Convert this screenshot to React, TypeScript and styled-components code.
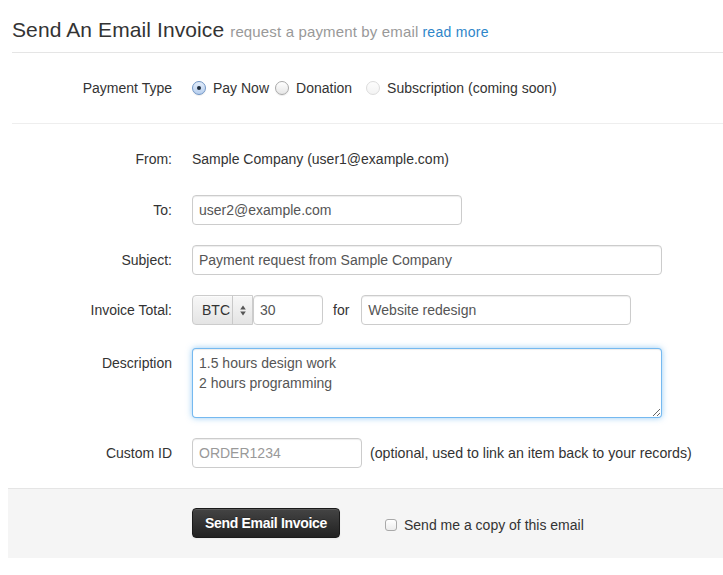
import React from "react";
import styled, { createGlobalStyle } from "styled-components";

const Global = createGlobalStyle`
  html, body { margin: 0; padding: 0; background: #fff; }
  body { font-family: "Liberation Sans", Arial, sans-serif; font-size: 14px; color: #333; }
  * { box-sizing: border-box; }
`;

const Page = styled.div`
  width: 723px;
  padding-left: 12px;
`;

const Header = styled.div`
  height: 53px;
  padding-top: 15px;
  border-bottom: 1px solid #e5e5e5;
  white-space: nowrap;
`;

const Title = styled.span`
  font-size: 21px;
  line-height: 30px;
  color: #333;
  letter-spacing: 0.1px;
`;

const Sub = styled.span`
  font-size: 15px;
  color: #999;
  margin-left: 6px;
  letter-spacing: 0.15px;
`;

const Link = styled.a`
  color: #2e86c9;
  text-decoration: none;
  margin-left: 4px;
  letter-spacing: 0.3px;
`;

const TypeSection = styled.div`
  padding: 25px 0 25px;
  border-bottom: 1px solid #eee;
`;

const Form = styled.div`
  padding-top: 20px;
`;

const Row = styled.div<{ $mb?: number }>`
  display: flex;
  align-items: flex-start;
  margin-bottom: ${(p) => (p.$mb ?? 20)}px;
`;

const Label = styled.div<{ $pt?: number }>`
  width: 160px;
  flex: none;
  text-align: right;
  line-height: 20px;
  padding-top: ${(p) => (p.$pt ?? 5)}px;
  margin-right: 20px;
`;

const Controls = styled.div<{ $pt?: number }>`
  display: flex;
  align-items: center;
  line-height: 20px;
  padding-top: ${(p) => (p.$pt ?? 0)}px;
  white-space: nowrap;
`;

const Radio = styled.span<{ $checked?: boolean; $disabled?: boolean }>`
  display: inline-block;
  position: relative;
  width: 14px;
  height: 14px;
  border-radius: 50%;
  margin-right: 7px;
  border: 1px solid ${(p) => (p.$checked ? "#6f94c4" : p.$disabled ? "#dcdcdc" : "#a9a9a9")};
  background: ${(p) =>
    p.$checked
      ? "linear-gradient(#e3edfa, #b7cfee)"
      : p.$disabled
      ? "linear-gradient(#fdfdfd, #f3f3f3)"
      : "linear-gradient(#ffffff, #e6e6e6)"};
  box-shadow: ${(p) => (p.$disabled ? "none" : "0 1px 1px rgba(0,0,0,0.08)")};
  &::after {
    content: "";
    display: ${(p) => (p.$checked ? "block" : "none")};
    position: absolute;
    left: 4px;
    top: 4px;
    width: 4px;
    height: 4px;
    border-radius: 50%;
    background: #1d2a3a;
  }
`;

const RadioLabel = styled.span<{ $mr: number }>`
  margin-right: ${(p) => p.$mr}px;
`;

const Input = styled.input<{ $w: number }>`
  width: ${(p) => p.$w}px;
  height: 30px;
  padding: 4px 6px;
  border: 1px solid #ccc;
  border-radius: 4px;
  font-family: "Liberation Sans", Arial, sans-serif;
  font-size: 14px;
  color: #555;
  line-height: 20px;
  box-shadow: inset 0 1px 1px rgba(0, 0, 0, 0.075);
  outline: none;
  background: #fff;
  &::placeholder { color: #999; }
`;

const TextArea = styled.textarea`
  width: 470px;
  height: 70px;
  padding: 4px 6px;
  border: 1px solid rgba(82, 168, 236, 0.8);
  border-radius: 4px;
  font-family: "Liberation Sans", Arial, sans-serif;
  font-size: 14px;
  line-height: 20px;
  color: #555;
  outline: none;
  box-shadow: inset 0 1px 1px rgba(0, 0, 0, 0.075), 0 0 6px rgba(82, 168, 236, 0.6);
  resize: both;
`;

const Select = styled.div`
  display: flex;
  align-items: center;
  width: 61px;
  height: 30px;
  border: 1px solid #ccc;
  border-radius: 4px 0 0 4px;
  background: linear-gradient(#f7f7f7, #e4e4e4);
  box-shadow: inset 0 1px 0 rgba(255,255,255,0.6);
  color: #333;
`;

const SelectText = styled.span`
  padding-left: 9px;
  width: 40px;
  border-right: 1px solid #c9c9c9;
  line-height: 28px;
`;

const Arrows = styled.span`
  flex: 1;
  display: flex;
  justify-content: center;
`;

const ForText = styled.span`
  margin: 0 12px 0 10px;
`;

const Help = styled.span`
  margin-left: 8px;
  color: #333;
  font-size: 14.2px;
`;

const Footer = styled.div`
  display: flex;
  align-items: center;
  margin-left: -4px;
  padding: 19px 0 20px 184px;
  height: 70px;
  background: #f5f5f5;
  border-top: 1px solid #e5e5e5;
`;

const Button = styled.button`
  width: 148px;
  height: 30px;
  border: 1px solid #1a1a1a;
  border-radius: 4px;
  background: linear-gradient(#444, #222);
  color: #fff;
  font-family: "Liberation Sans", Arial, sans-serif;
  font-size: 14px;
  font-weight: bold;
  letter-spacing: -0.3px;
  text-shadow: 0 -1px 0 rgba(0,0,0,0.25);
  box-shadow: inset 0 1px 0 rgba(255,255,255,0.12), 0 1px 2px rgba(0,0,0,0.05);
  padding: 0;
`;

const Check = styled.span`
  display: inline-block;
  width: 12px;
  height: 12px;
  margin: 4px 7px 0 45px;
  border: 1px solid #a9a9a9;
  border-radius: 3px;
  background: linear-gradient(#fff, #ececec);
`;

const CheckLabel = styled.span`
  padding-top: 4px;
`;

export default function App() {
  return (
    <>
      <Global />
      <Page>
        <Header>
          <Title>Send An Email Invoice</Title>
          <Sub>request a payment by email</Sub>
          <Link href="#">read more</Link>
        </Header>
        <TypeSection>
          <Row $mb={0}>
            <Label $pt={0}>Payment Type</Label>
            <Controls>
              <Radio $checked />
              <RadioLabel $mr={6}>Pay Now</RadioLabel>
              <Radio />
              <RadioLabel $mr={14}>Donation</RadioLabel>
              <Radio $disabled />
              <RadioLabel $mr={0}>Subscription (coming soon)</RadioLabel>
            </Controls>
          </Row>
        </TypeSection>
        <Form>
          <Row $mb={26}>
            <Label>From:</Label>
            <Controls $pt={5}>Sample Company (user1@example.com)</Controls>
          </Row>
          <Row>
            <Label>To:</Label>
            <Controls>
              <Input $w={270} defaultValue="user2@example.com" />
            </Controls>
          </Row>
          <Row>
            <Label>Subject:</Label>
            <Controls>
              <Input $w={470} defaultValue="Payment request from Sample Company" />
            </Controls>
          </Row>
          <Row $mb={23}>
            <Label>Invoice Total:</Label>
            <Controls>
              <Select>
                <SelectText>BTC</SelectText>
                <Arrows>
                  <svg width="6" height="11" viewBox="0 0 6 11">
                    <path d="M3 0.5 L5.8 4.5 H0.2 Z" fill="#555" />
                    <path d="M3 10.5 L5.8 6.5 H0.2 Z" fill="#555" />
                  </svg>
                </Arrows>
              </Select>
              <Input $w={70} defaultValue="30" />
              <ForText>for</ForText>
              <Input $w={270} defaultValue="Website redesign" />
            </Controls>
          </Row>
          <Row>
            <Label>Description</Label>
            <Controls>
              <TextArea defaultValue={"1.5 hours design work\n2 hours programming"} />
            </Controls>
          </Row>
          <Row>
            <Label>Custom ID</Label>
            <Controls>
              <Input $w={170} placeholder="ORDER1234" />
              <Help>(optional, used to link an item back to your records)</Help>
            </Controls>
          </Row>
        </Form>
        <Footer>
          <Button>Send Email Invoice</Button>
          <Check />
          <CheckLabel>Send me a copy of this email</CheckLabel>
        </Footer>
      </Page>
    </>
  );
}
